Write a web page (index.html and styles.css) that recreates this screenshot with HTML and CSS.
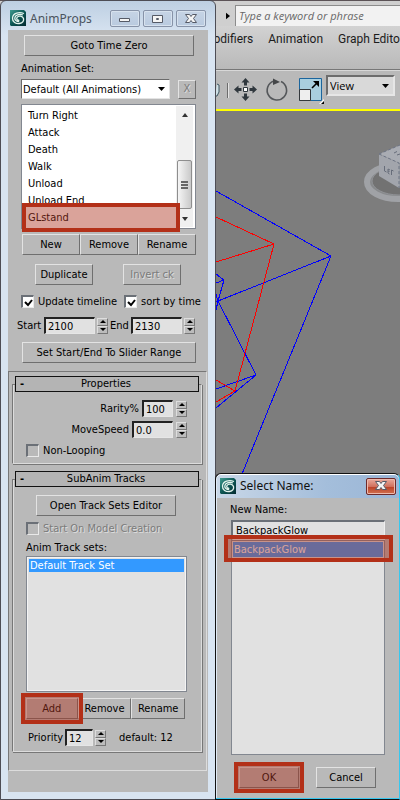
FILE: index.html
```html
<!DOCTYPE html>
<html lang="en">
<head>
<meta charset="utf-8">
<title>AnimProps</title>
<link rel="stylesheet" href="styles.css">
</head>
<body>
<svg class="defs" aria-hidden="true">
  <defs>
    <linearGradient id="teal" x1="0" y1="0" x2="1" y2="1"><stop offset="0" stop-color="#3f9c90"/><stop offset=".5" stop-color="#0d5654"/><stop offset="1" stop-color="#042b30"/></linearGradient>
    <symbol id="logo" viewBox="0 0 16 16">
      <path d="M0 0h14l2 2v14H1L0 15z" fill="url(#teal)"/>
      <path d="M14 3.500C9 1.500 3 3 2.500 8c-.3 4 3.500 6 7 5.500 3.500-.5 4.500-3 4-5-.7-2.500-5-3.300-6.500-1-1 1.800.8 3.300 2.300 2.500M13 5C9 3.500 5 5 4.800 8c-.2 2.500 2.200 3.800 4.400 3.500" fill="none" stroke="#e4f4ee" stroke-width="1.300"/>
    </symbol>
  </defs>
</svg>
<main class="app">
  <div class="searchbar">
    <svg class="play" viewBox="0 0 5 8"><path d="M0 0l5 4-5 4z"/></svg>
    <input class="search" type="text" aria-label="Search" placeholder="Type a keyword or phrase">
  </div>
  <nav class="menu"><a href="#">Modifiers</a><a href="#">Animation</a><a href="#">Graph Editors</a></nav>
  <div class="toolbar">
    <svg class="tools" viewBox="216 70 112 38" aria-hidden="true">
      <path d="M215 95h2l2-4v-7l-2-1" fill="#cfe0e6" stroke="#3c5560"/>
      <path d="M227.500 82v15" stroke="#6c6c6c"/><path d="M228.500 82v15" stroke="#e4e4e4"/>
      <g fill="#30383e"><path d="M245.500 77l4 4.500h-2.500v3h-3v-3h-2.500zM245.500 100l4-4.500h-2.500v-3h-3v3h-2.500zM234 88.500l4.500-4v2.500h3v3h-3v2.500zM257 88.500l-4.500-4v2.500h-3v3h3v2.500z"/></g>
      <path d="M243.500 86.500h4v4h-4z" fill="#fff" stroke="#30383e"/>
      <path d="M281 80.500a9.700 9.700 0 1 1-7-.5" fill="none" stroke="#54575a" stroke-width="1.600"/>
      <path d="M273 77.500l7 3.500-7 3z" fill="#454749"/>
      <path d="M299.500 77.500h22v22h-22z" fill="#a9cfdf" stroke="#1b659d"/>
      <path d="M299.500 88.500h11v11h-11z" fill="#eee" stroke="#33383c"/>
      <path d="M312 87l5-5" stroke="#000" stroke-width="1.600"/><path d="M313 80h6v6z"/>
      <path d="M324 98v5h-5z" fill="#fff"/><path d="M324 100v3h-3z"/>
    </svg>
    <select class="view" aria-label="Reference coordinate system"><option>View</option></select>
  </div>
  <svg class="viewport" viewBox="0 111 400 689" aria-hidden="true">
    <g fill="none" shape-rendering="crispEdges">
      <path stroke="#00f" d="M216 191L331 256L218 301M331 256L242 474M216 274L224 280L216 283M224 280L218 301L216 310M216 294L218 301H216M218 301L256 375L216 389M256 375L216 408"/>
      <path stroke="#f00" d="M216 217L274 244L216 262M274 244L235 391L216 380M235 391L216 402"/>
    </g>
    <ellipse cx="398" cy="182" rx="31" ry="17" fill="#888a8c" stroke="#a0a2a6" stroke-width="6"/>
    <ellipse cx="399" cy="181" rx="27" ry="14" fill="#727272" stroke="#909296"/>
    <path d="M379 154l21-9 20 8-21 10z" fill="#a9acb3"/>
    <path d="M379 154l20 9v25l-20-12z" fill="#a2a5ac"/>
    <path d="M399 163l21-9v22l-21 12z" fill="#969aa1"/>
    <path d="M379 154l20 9v25M379 154l21-9" fill="none" stroke="#6d7484" stroke-dasharray="3 2"/>
    <path d="M384.500 166v5l2 1M389.500 174l-1.500-1v-4l2 1M388 171l1.500.5M391.500 175v-5l2 1M394 153l3-1.500M397 155l3-1" fill="none" stroke="#676d7a"/>
  </svg>
</main>

<section class="window palette">
  <header class="titlebar">
    <svg class="logo"><use href="#logo"/></svg>
    <h1>AnimProps</h1>
    <button class="winbtn" aria-label="Minimize"><svg viewBox="0 0 12 12"><path d="M.5 5.500h10v3H.5z"/></svg></button>
    <button class="winbtn" aria-label="Maximize"><svg viewBox="0 0 12 12"><path d="M.5 2.500h10v7H.5zM4.500 5.500h2v1h-2z"/></svg></button>
    <button class="winbtn" aria-label="Close"><svg viewBox="0 0 12 12"><path d="M.5 1.500h4l1.500 2 1.500-2h4L8.500 5.500l3 4h-4L6 7.500l-1.500 2h-4l3-4z"/></svg></button>
  </header>
  <div class="client">
    <div class="main-controls">
      <button class="btn goto">Goto Time Zero</button>
      <label class="set-label" for="animset">Animation Set:</label>
      <div class="row set-row">
        <select id="animset" class="combo"><option>Default (All Animations)</option></select>
        <button class="btn x-btn" disabled>X</button>
      </div>
      <div class="anim-list">
        <ul>
          <li>Turn Right</li><li>Attack</li><li>Death</li><li>Walk</li><li>Unload</li><li>Unload End</li><li class="current">GLstand</li>
        </ul>
        <div class="scrollbar">
          <svg viewBox="0 0 6 4"><path d="M0 4l3-4 3 4z"/></svg>
          <div class="thumb"><i></i><i></i><i></i></div>
          <svg viewBox="0 0 6 4"><path d="M0 0l3 4 3-4z"/></svg>
        </div>
        <span class="mark mark-item"></span>
      </div>
      <div class="row trio"><button class="btn">New</button><button class="btn">Remove</button><button class="btn">Rename</button></div>
      <div class="row pair"><button class="btn">Duplicate</button><button class="btn" disabled>Invert ck</button></div>
      <div class="row checks">
        <label class="check"><input type="checkbox" checked>Update timeline</label>
        <label class="check"><input type="checkbox" checked>sort by time</label>
      </div>
      <div class="row range">
        <label for="start">Start</label><input id="start" class="field" value="2100"><span class="spin"><button aria-label="Increase start"></button><button aria-label="Decrease start"></button></span>
        <label for="end">End</label><input id="end" class="field" value="2130"><span class="spin"><button aria-label="Increase end"></button><button aria-label="Decrease end"></button></span>
      </div>
      <button class="btn slider-range">Set Start/End To Slider Range</button>
    </div>
    <div class="rollouts">
      <section class="rollout">
        <h2><span>-</span>Properties</h2>
        <div class="group props">
          <div class="row num"><label for="rarity">Rarity%</label><input id="rarity" class="field rarity" value="100"><span class="spin"><button aria-label="Increase rarity"></button><button aria-label="Decrease rarity"></button></span></div>
          <div class="row num"><label for="speed">MoveSpeed</label><input id="speed" class="field speed" value="0.0"><span class="spin"><button aria-label="Increase speed"></button><button aria-label="Decrease speed"></button></span></div>
          <label class="check"><input type="checkbox">Non-Looping</label>
        </div>
      </section>
      <section class="rollout">
        <h2><span>-</span>SubAnim Tracks</h2>
        <div class="group tracks">
          <button class="btn editor">Open Track Sets Editor</button>
          <label class="check off"><input type="checkbox" disabled>Start On Model Creation</label>
          <p class="list-label">Anim Track sets:</p>
          <ul class="track-list"><li>Default Track Set</li></ul>
          <div class="row track-btns"><span class="marked"><button class="btn">Add</button><span class="mark"></span></span><button class="btn">Remove</button><button class="btn">Rename</button></div>
          <div class="row priority"><label for="prio">Priority</label><input id="prio" class="field" value="12"><span class="spin"><button aria-label="Increase priority"></button><button aria-label="Decrease priority"></button></span><span class="default">default: 12</span></div>
        </div>
      </section>
    </div>
  </div>
</section>

<section class="window dialog">
  <header class="titlebar">
    <svg class="logo"><use href="#logo"/></svg>
    <h1>Select Name:</h1>
    <button class="winbtn close" aria-label="Close"><svg viewBox="0 0 12 12"><path d="M.5 1.500h4l1.500 2 1.500-2h4L8.500 5.500l3 4h-4L6 7.500l-1.500 2h-4l3-4z"/></svg></button>
  </header>
  <div class="client">
    <label for="newname">New Name:</label>
    <div class="names">
      <input id="newname" value="BackpackGlow">
      <ul><li>BackpackGlow</li></ul>
      <span class="mark mark-name"></span>
    </div>
    <div class="row actions"><span class="marked"><button class="btn">OK</button><span class="mark"></span></span><button class="btn">Cancel</button></div>
  </div>
</section>
</body>
</html>
```
FILE: styles.css
```css
* { box-sizing: border-box; }
body, h1, h2, ul, p { margin: 0; padding: 0; }
ul { list-style: none; }
body {
  position: relative;
  min-height: 100vh;
  overflow: hidden;
  background: #7d7d7d;
  color: #000;
  font: 11px/13px "DejaVu Sans Condensed", "DejaVu Sans", sans-serif;
}
button, input, select { font: inherit; color: inherit; margin: 0; border-radius: 0; min-width: 0; }
.defs { position: absolute; width: 0; height: 0; }
.row { display: flex; align-items: center; }

/* host application */
.app { display: flex; flex-direction: column; font-family: "Open Sans", "Noto Sans", sans-serif; }
.searchbar {
  display: flex; align-items: center; gap: 5px;
  height: 26px; padding: 4px 0 0 226px;
  border-top: 1px solid #5c5357;
  background: #cfcfcf;
}
.play { width: 4px; height: 8px; }
.search {
  flex: 1; height: 22px; padding: 0 3px;
  border: 1px solid #8c8c8c; border-right: 0;
  background: #f2f2f2;
  font-size: 11px; font-style: italic;
}
.search::placeholder { color: #686868; opacity: 1; }
.menu {
  display: flex; gap: 15px;
  height: 44px; padding: 4px 0 0 203px;
  background: linear-gradient(#d2d2d2, #b9b9b9);
  border-bottom: 1px solid #777;
  font: 12px/18px Roboto, "Open Sans", sans-serif; white-space: nowrap;
}
.menu a { color: #1c1c1c; text-decoration: none; }
.toolbar {
  display: flex;
  height: 41px; padding-left: 216px;
  border-top: 1px solid #d8d8d8;
  border-bottom: 2px solid #ff0;
  background: #b9b9b9;
}
.tools { width: 112px; height: 38px; margin-right: -2px; }
select {
  appearance: none;
  background: #fff url("data:image/svg+xml,%3Csvg xmlns='http://www.w3.org/2000/svg' width='7' height='4'%3E%3Cpath d='M0 0h7L3.500 4z'/%3E%3C/svg%3E") no-repeat right 4px center;
  outline: 0;
}
.view {
  width: 69px; height: 21px; margin-top: 4px; padding: 0 2px;
  border: 2px solid #e6e6e6; border-top-color: #6d6d6d; border-left-color: #6d6d6d;
  background-color: #d9d9d9;
  font-size: 11px; line-height: 16px;
}
.viewport { width: 400px; height: 689px; }

/* window chrome */
.window { position: absolute; display: flex; flex-direction: column; }
.palette {
  top: 0; bottom: 0; left: 0; width: 216px;
  padding: 0 7px 7px;
  border: 1px solid #4d4d55; border-radius: 6px 6px 0 0;
  background: linear-gradient(#bdcfe2, #d8e4f1 34px);
}
.dialog {
  top: 473px; bottom: 0; left: 215px; right: 0;
  padding: 0 0 1px 1px;
  border: 1px solid #111; border-right: 1px solid #37c7ef; border-radius: 6px 6px 0 0;
  background: linear-gradient(90deg, #c9d7e7, #a4bedb 60%, #9bb6d6);
  box-shadow: inset 0 1px #fff, inset 0 -1px #37c7ef, inset 1px 0 #dfe9f4;
}
.titlebar { display: flex; align-items: center; }
.palette .titlebar { height: 29px; padding: 6px 2px 0 2px; gap: 4px; align-items: flex-start; }
.dialog .titlebar { height: 24px; padding: 0 3px 0 3px; }
.titlebar h1 { flex: 1; font: 12px/18px "Noto Sans", "Open Sans", sans-serif; color: #4b545e; white-space: nowrap; }
.dialog h1 { padding-left: 4px; color: #111; }
.logo { width: 16px; height: 16px; margin-top: 3px; flex: none; }
.dialog .logo { margin: 0; }
.palette h1 { margin-top: 3px; }
.winbtn {
  display: flex; align-items: center; justify-content: center;
  width: 30px; height: 17px; margin-top: 3px; padding: 0;
  border: 1px solid #8793a8; border-radius: 2px;
  background: linear-gradient(#c6d4e5, #b9cadf);
  box-shadow: inset 0 0 0 1px #d7e2ee;
}
.winbtn + .winbtn { margin-left: -1px; }
.winbtn svg { width: 12px; height: 12px; fill: #f4f4f4; stroke: #555a66; }
.winbtn.close { margin: 0; border-color: #6f2a2a; background: linear-gradient(#e9aa9d, #d0715e 50%, #b83d24 50%, #d1714f); box-shadow: inset 0 0 0 1px #eeb9ac; }
.client { flex: 1; background: #b9b9b9; display: flex; flex-direction: column; }

/* shared controls */
.btn {
  height: 21px; padding: 0 0 1px; text-align: center;
  border: 1px solid #e3e3e3; border-right-color: #6f6f6f; border-bottom-color: #6f6f6f;
  background: #b9b9b9; white-space: nowrap;
}
.btn:disabled { color: #7b7b7b; text-shadow: 1px 1px #dedede; }
.field {
  height: 17px; padding: 0 2px; width: 51px;
  border: 1px solid #e6e6e6; border-top: 2px solid #222; border-left: 2px solid #222;
  background: #e1e1e1;
}
.spin { display: flex; flex-direction: column; width: 11px; height: 16px; margin-left: 2px; flex: none; }
.spin button {
  display: flex; align-items: center; justify-content: center;
  flex: 1; padding: 0;
  border: 1px solid #dedede; border-right-color: #777; border-bottom-color: #777;
  background: #bcbcbc;
}
.spin button::before { content: ""; border: 3px solid transparent; border-top: 0; border-bottom: 3px solid #000; }
.spin button + button::before { border-bottom: 0; border-top: 3px solid #000; }
.check { display: flex; align-items: center; gap: 4px; white-space: nowrap; }
.check input {
  appearance: none; width: 13px; height: 13px; flex: none;
  border: 1px solid #e9e9e9; border-top: 2px solid #6b7077; border-left: 2px solid #6b7077;
  background: #b9b9b9;
}
.check input:checked { background: #fff url("data:image/svg+xml,%3Csvg xmlns='http://www.w3.org/2000/svg' width='9' height='9'%3E%3Cpath d='M1 4l3 3 4-5' fill='none' stroke='%23000' stroke-width='2'/%3E%3C/svg%3E") center no-repeat; }
.check.off { color: #7b7b7b; text-shadow: 1px 1px #dedede; }
.marked { position: relative; display: flex; }
.marked .btn { flex: 1; }
.mark { position: absolute; inset: -5px; border: 4px solid #b33018; background: rgba(172, 52, 30, .45); pointer-events: none; }

/* animation controls */
.main-controls { display: flex; flex-direction: column; padding: 5px 12px 8px 13px; }
.goto { margin: 0 2px 0 3px; }
.set-label { margin-top: 6px; }
.set-row { margin-top: 4px; gap: 8px; }
.combo { flex: 1; height: 20px; padding: 0 1px; border: 1px solid #e3e3e3; border-top-color: #6b6b6b; border-left-color: #6b6b6b; }
.x-btn { width: 18px; height: 19px; }
.anim-list {
  position: relative; display: flex;
  height: 125px; margin-top: 5px;
  border: 1px solid #828790; background: #fff;
}
.anim-list ul { flex: 1; padding: 2px 0 0 6px; line-height: 17px; }
.scrollbar { display: flex; flex-direction: column; align-items: center; width: 17px; margin: 1px 2px 1px 0; padding: 7px 0 6px; background: #f0f0f0; }
.scrollbar svg { width: 6px; height: 4px; fill: #333; }
.thumb {
  display: flex; flex-direction: column; justify-content: center; align-items: center; gap: 1px;
  width: 15px; height: 49px; margin-top: auto; margin-bottom: 8px;
  border: 1px solid #8e8e8e; border-radius: 2px;
  background: linear-gradient(90deg, #f5f5f5, #c9c9c9);
}
.thumb i { width: 7px; height: 2px; background: #666; }
.mark-item { inset: auto 15px -4px 0; height: 29px; }
.trio { margin: 5px 0 0 1px; }
.trio .btn { flex: 1; }
.pair { margin: 9px 15px 0 14px; justify-content: space-between; }
.pair .btn { width: 58px; }
.checks { margin: 10px -4px 0 0; }
.checks .check:first-child { flex: 0 0 103px; }
.range { margin: 9px 1px 0 -4px; }
.range label { flex: 0 0 27px; }
.range label:nth-of-type(2) { flex-basis: 21px; margin-left: 2px; }
.range .field { flex: 1; }
.slider-range { margin: 8px 0 0 1px; }

/* rollouts */
.rollouts {
  display: flex; flex-direction: column; gap: 7px;
  height: 400px; margin-right: 1px; padding: 4px 4px 0 3px;
  border: 1px solid #777; border-right-color: #dcdcdc; border-bottom-color: #dcdcdc;
}
.rollout h2 {
  position: relative;
  height: 16px; margin: 0 3px; padding-right: 2px;
  border: 1px solid #111; background: #b4b4b4;
  font-size: 11px; line-height: 14px; font-weight: 400; text-align: center;
}
.rollout h2 span { position: absolute; left: 4px; top: 0; font-weight: 700; }
.group {
  display: flex; flex-direction: column;
  margin-top: -8px; padding: 15px 14px 0 13px;
  border: 1px solid #777; border-right-color: #dcdcdc; border-bottom-color: #dcdcdc;
  box-shadow: 1px 1px #777, inset 1px 0 #dcdcdc;
}
.props { height: 80px; }
.num { justify-content: flex-end; gap: 3px; margin-bottom: 4px; }
.num .spin { margin: 0; }
.props .check { margin-top: 2px; }
.field.rarity { width: 31px; }
.field.speed { width: 41px; }
.tracks { height: 273px; }
.editor { margin: 0 11px 0 10px; }
.tracks .check { margin-top: 6px; }
.list-label { margin-top: 6px; }
.track-list {
  height: 136px; margin-top: 2px; padding: 1px;
  border: 1px solid #828790; outline: 1px solid #f4f4f4; outline-offset: -2px;
  background: #e1e1e1;
}
.track-list li { margin: 1px; padding-left: 1px; background: #39f; color: #fff; }
.track-btns { margin: 6px 2px 0 0; }
.track-btns > * { flex: 1; }
.priority { margin: 10px 0 0 2px; }
.priority label { width: 37px; }
.priority .field { width: 28px; }
.default { margin-left: 13px; }

/* name dialog */
.dialog .client { padding: 5px 14px 10px 13px; }
.names { position: relative; flex: 1; display: flex; flex-direction: column; margin: 4px 0 0 1px; }
.names input {
  height: 20px; padding: 0 3px;
  border: 1px solid #eee; border-top: 2px solid #6b7077; border-left: 2px solid #6b7077;
  background: #e1e1e1;
}
.names ul { flex: 1; padding: 1px; border: 1px solid #828790; background: #e1e1e1; }
.names li { padding: 0 1px; background: #39f; color: #fff; line-height: 15px; }
.mark-name { inset: 15px -8px auto -7px; height: 27px; background: rgba(172, 52, 30, .45); }
.actions { margin-top: 12px; padding: 0 9px; justify-content: space-between; }
.actions .btn { width: 60px; flex: none; }
```
